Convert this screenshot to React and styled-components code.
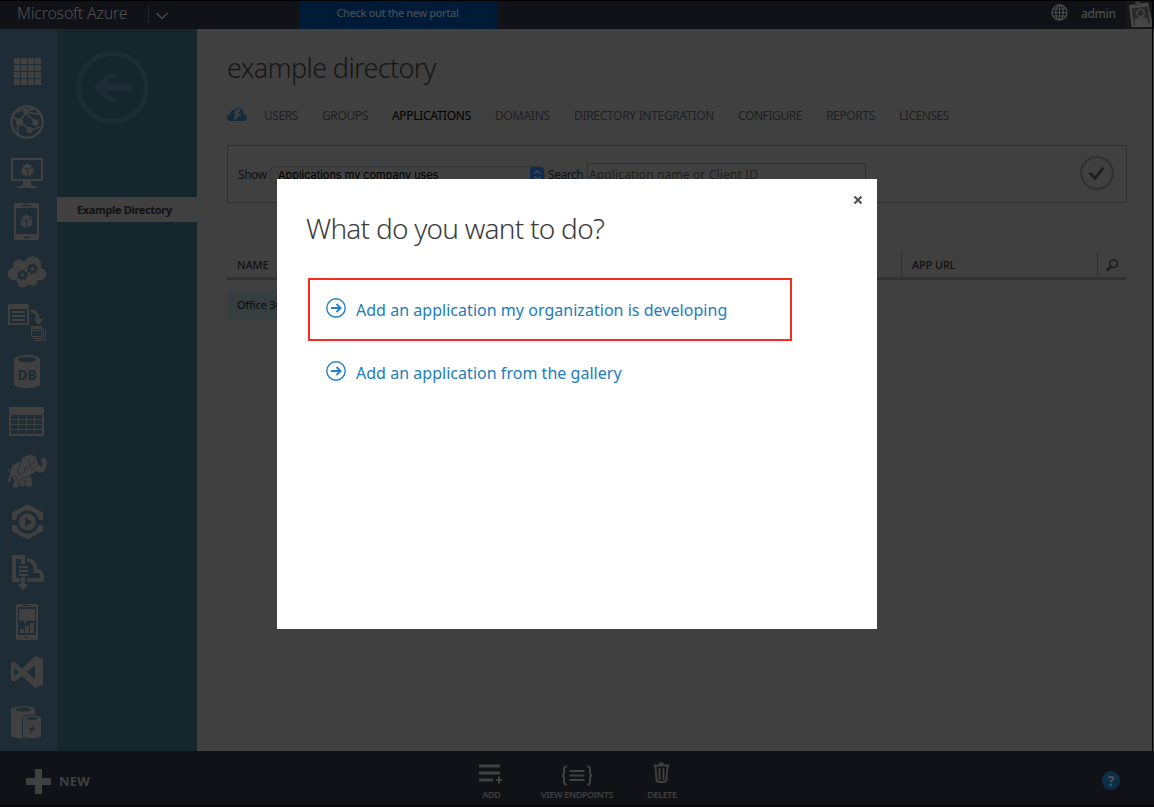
import React from "react";
import styled, { createGlobalStyle } from "styled-components";

const ink = "#404040";
const railBg = "#1d2c35";
const barBg = "#111217";

const GlobalStyle = createGlobalStyle`
  * { box-sizing: border-box; }
  body {
    margin: 0;
    background: ${ink};
    font-family: "Noto Sans", "Open Sans", sans-serif;
    color: #111;
    overflow: hidden;
  }
  h1, h2, p { margin: 0; font-weight: 300; }
  svg { display: block; flex: none; }
`;

const Page = styled.div`
  width: 1154px;
  height: 807px;
  display: grid;
  grid-template-rows: 29px 722px 56px;
  background: ${ink};
`;

const Label = styled.span`
  white-space: nowrap;
  line-height: 16px;
  font-size: ${(p) => p.$size || 12}px;
  font-weight: ${(p) => p.$weight || 400};
  letter-spacing: ${(p) => p.$track || 0}px;
  color: ${(p) => p.$color || "#111"};
`;

/* Header */
const TopBar = styled.header`
  display: flex;
  border-top: 1px solid #000;
  background: ${barBg};
`;
const Brand = styled.div`
  width: 149px;
  padding: 4px 0 0 17px;
  display: flex;
  justify-content: space-between;
`;
const BrandRule = styled.i`
  width: 1px;
  height: 18px;
  background: #24252a;
`;
const BrandMenu = styled.div`
  width: 150px;
  padding: 11px 0 0 6px;
`;
const PortalButton = styled.a`
  width: 198px;
  height: 28px;
  padding: 4px 1px 0 0;
  display: flex;
  justify-content: center;
  background: #001b37;
`;
const Account = styled.div`
  margin-left: auto;
  display: flex;
  padding-right: 1px;
`;
const GlobeSlot = styled.div`padding: 3px 13px 0 0;`;
const UserSlot = styled.div`
  width: 45px;
  padding-top: 5px;
  display: flex;
  align-items: flex-start;
`;
const Avatar = styled.div`
  width: 27px;
  background: #17171a;
  border-right: 1px solid #000;
`;

/* Body */
const Body = styled.div`
  display: grid;
  grid-template-columns: 57px 140px 1fr;
`;
const Rail = styled.nav`
  background: ${railBg};
  padding-top: 17px;
  display: flex;
  flex-direction: column;
`;
const DirectoryPane = styled.aside`
  background: #15272d;
  padding-top: 22px;
`;
const BackButton = styled.div`
  height: 146px;
  padding-left: 19px;
`;
const DirectoryItem = styled.div`
  height: 25px;
  display: flex;
  align-items: center;
  padding: 1px 0 0 20px;
  background: ${ink};
`;
const Content = styled.main`
  border-right: 1px solid #000;
  margin-right: 1px;
  padding: 20px 25px 0 30px;
`;
const Title = styled.h1`
  font-size: 27px;
  line-height: 38px;
  letter-spacing: -0.64px;
  color: #161616;
`;
const Tabs = styled.div`
  height: 58px;
  padding-top: 20px;
  display: flex;
  align-items: flex-start;
`;
const TabIcon = styled.div`
  width: 37px;
  margin-top: -2px;
`;
const Tab = styled.a`
  width: ${(p) => p.$width}px;
  margin-right: 24px;
  white-space: nowrap;
  font-size: 12px;
  line-height: 18px;
  letter-spacing: ${(p) => p.$track}px;
  color: ${(p) => (p.$active ? "#000" : "#202020")};
`;
const FilterBar = styled.section`
  height: 58px;
  border: 1px solid #303030;
  display: flex;
  padding: 17px 12px 0 10px;
`;
const FilterLabel = styled.label`
  width: ${(p) => p.$width}px;
  padding-top: 4px;
  font-size: 12px;
  line-height: 16px;
  letter-spacing: -0.45px;
`;
const Select = styled.div`
  width: 275px;
  height: 18px;
  margin: 3px 3px 0 0;
  border: 1px solid #343434;
  border-radius: 5px;
  display: flex;
  overflow: hidden;
  justify-content: space-between;
  padding-left: 7px;
  font: 11px/16px Inter, sans-serif;
  letter-spacing: -0.04px;
  color: #000;
`;
const Stepper = styled.span`
  width: 15px;
  height: 18px;
  margin: -1px -1px 0 0;
  background: #102c4d;
`;
const SearchInput = styled.div`
  width: 279px;
  height: 22px;
  border: 1px solid #2d2d2d;
  padding-left: 1px;
  font-size: 12px;
  line-height: 21px;
  letter-spacing: 0.14px;
  color: #202020;
`;
const Confirm = styled.div`
  margin: -8px 0 0 auto;
`;
const TableHead = styled.div`
  height: 29px;
  margin-top: 48px;
  border-bottom: 3px solid #323232;
  display: flex;
  line-height: 23px;
`;
const HeadCell = styled.div`
  width: ${(p) => p.$width}px;
  padding: ${(p) => (p.$icon ? "8px 0 0 8px" : "1px 0 0 10px")};
  border-left: ${(p) => (p.$first ? "0" : "1px solid #303030")};
`;
const TableRow = styled.div`
  width: 640px;
  height: 30px;
  margin-top: 10px;
  padding: 7px 10px;
  display: flex;
  align-items: flex-start;
  background: #373e40;
`;

/* Footer */
const Footer = styled.footer`
  display: flex;
  background: ${barBg};
  border-bottom: 1px solid #08090c;
  box-shadow: inset 0 -1px #000;
`;
const NewButton = styled.div`
  width: 478px;
  padding: 18px 0 0 26px;
  display: flex;
  gap: 8px;
  align-items: flex-start;
`;
const NewText = styled.span`
  padding-top: 3px;
  line-height: 19px;
  font-size: 13px;
  font-weight: 700;
  letter-spacing: 0.2px;
  color: ${ink};
`;
const Command = styled.div`
  width: ${(p) => p.$width}px;
  padding-top: 11px;
  display: flex;
  flex-direction: column;
  align-items: center;
`;
const CommandText = styled.span`
  margin-top: 3px;
  white-space: nowrap;
  font-size: 9px;
  line-height: 12px;
  font-weight: 600;
  letter-spacing: ${(p) => p.$track}px;
  color: ${ink};
`;
const Help = styled.div`
  margin: 20px 34px 0 auto;
  width: 18px;
  height: 19px;
  border-radius: 50%;
  background: #0c2f47;
  text-align: center;
  font-size: 14px;
  line-height: 19px;
  font-weight: 700;
  color: #4b5358;
`;

/* Dialog */
const Backdrop = styled.div`
  position: absolute;
  top: 0;
  left: 0;
  width: 1154px;
  height: 807px;
  padding-top: 179px;
  display: flex;
  justify-content: center;
  align-items: flex-start;
`;
const Dialog = styled.section`
  width: 600px;
  height: 450px;
  background: #fff;
  padding: 16px 14px 0 29px;
`;
const CloseRow = styled.div`
  display: flex;
  justify-content: flex-end;
  height: 14px;
`;
const Question = styled.h2`
  font-size: 28px;
  line-height: 38px;
  letter-spacing: -0.76px;
  color: #3c3c3c;
`;
const Option = styled.a`
  width: 484px;
  height: 63px;
  margin: ${(p) => (p.$marked ? "31px 0 0 2px" : "0 0 0 2px")};
  border: 2px solid ${(p) => (p.$marked ? "#fb2a20" : "transparent")};
  padding: 17px 0 0 16px;
  display: flex;
  gap: 10px;
`;
const OptionText = styled.span`
  white-space: nowrap;
  font-size: 16px;
  line-height: 26px;
  letter-spacing: 0.03px;
  color: #217cbb;
`;

const Cube = ({ x, y }) => (
  <g transform={`translate(${x} ${y})`}>
    <path d="M0-6.6 5.8-3.7 0-.8-5.8-3.7Z" />
    <path d="M-5.8-2.8-.5-.1V6.5L-5.8 3.8ZM5.8-2.8.5-.1V6.5L5.8 3.8Z" />
  </g>
);

const Gear = ({ x, y }) => (
  <g transform={`translate(${x} ${y})`} fill="none" stroke={railBg}>
    <circle r="3" strokeWidth="2" />
    <circle r="4.7" strokeWidth="1.7" strokeDasharray="1.85 1.84" />
  </g>
);

const railIcons = {
  all: [0, 1, 2, 3].map((r) =>
    [0, 1, 2, 3].map((c) => (
      <rect key={`${r}${c}`} x={14 + c * 7} y={12 + r * 7} width="6" height="6" />
    ))
  ),
  web: (
    <g fill="none" stroke={ink}>
      <circle cx="27" cy="26" r="15.7" strokeWidth="2.3" />
      <path d="M22 11C25 16 32 18 40 18M35 12C29 13 22 20 20 26M15 17C20 14 27 12 33 14M20 26 30 34 40 31M36 26C31 22 27 19 24 15M20 26C17 30 17 34 18 39M13 21 20 26" strokeWidth="1.8" />
      <g fill={ink} stroke="none">
        <circle cx="19.5" cy="26" r="3.8" />
        <circle cx="35.5" cy="26.5" r="3.3" />
        <circle cx="29.5" cy="34" r="3.1" />
        <circle cx="25" cy="15" r="2.3" />
      </g>
    </g>
  ),
  vm: (
    <>
      <path fillRule="evenodd" d="M12 12H42Q43 12 43 13V34Q43 35 42 35H12Q11 35 11 34V13Q11 12 12 12ZM13 14V33H41V14Z" />
      <path d="M23 35H31V38Q31 40 37.500 40.500V42H16.500V40.500Q23 40 23 38Z" />
      <Cube x={27.5} y={24} />
    </>
  ),
  mobile: (
    <>
      <path fillRule="evenodd" d="M15 7H38Q39 7 39 8V43Q39 44 38 44H15Q14 44 14 43V8Q14 7 15 7ZM16 12V38H37V12Z" />
      <path d="M22 9.500H31M24 41.500H29.500" stroke={railBg} strokeWidth="1.3" />
      <Cube x={26.5} y={25.3} />
    </>
  ),
  cloud: (
    <>
      <circle cx="14" cy="28" r="6.3" />
      <circle cx="19" cy="19.500" r="6" />
      <circle cx="32.500" cy="19" r="8.700" />
      <circle cx="39.800" cy="28" r="6.300" />
      <circle cx="23" cy="35" r="6.500" />
      <circle cx="32.500" cy="35" r="5" />
      <rect x="15" y="20" width="24" height="14" />
      <Gear x={22.5} y={29} />
      <Gear x={32.3} y={22.8} />
    </>
  ),
  scheduler: (
    <>
      <path fillRule="evenodd" d="M9 8H28Q29 8 29 9V29H8V9Q8 8 9 8ZM10 13V27H27V13Z" />
      <path d="M12 15H25V17H12ZM12 19H25V21H12ZM12 23H25V25H12Z" />
      <path d="M30.500 15C35 14.500 38 18 38 24" fill="none" stroke={ink} strokeWidth="3" />
      <path d="M34 23H43L38.500 29Z" />
      <path fillRule="evenodd" d="M31 30H42V41H31ZM32 33V40H41V33Z" />
      <path d="M33 34.500H40M43.500 32V42.500H33M45.500 34V44.500H35" fill="none" stroke={ink} />
    </>
  ),
  database: (
    <>
      <path d="M14 13.500C14 7.500 40 7.500 40 13.500V38C40 43.500 14 43.500 14 38Z" />
      <ellipse cx="27" cy="13.5" rx="9" ry="2.7" fill={railBg} />
      <text x="27" y="34" textAnchor="middle" fontSize="13.5" fontWeight="700" fill={railBg}>DB</text>
    </>
  ),
  table: (
    <>
      <rect x="9" y="11" width="35" height="29" rx="1" />
      {[0, 1, 2, 3].map((r) =>
        [0, 1, 2, 3].map((c) => (
          <rect key={`${r}${c}`} x={11 + c * 8} y={19 + r * 5} width="7" height="4" fill={railBg} />
        ))
      )}
    </>
  ),
  hadoop: (
    <>
      <path d="M7.500 20.500Q8 24.500 11 23.500C12 18 17 16 21 16C22 11 26 9 30 9C34 8.500 36.500 11 37 14C38 17 38.500 20.500 41.500 20.500C43.500 20 43 16 40.500 14.500Q43 11 45.500 12C48 17 47 23 43.500 25.500C40 27.500 37 26.500 35.500 24.500C34.500 27.500 31.500 28 29.500 29.500Q33 34 32 40L28 41.500 26 39 23 41 19 38.500 17.500 42 12 41 15 35 12 30 9.500 37.500 7.500 34.500C10.500 31 9 28 11 25Q7 25.500 7.500 20.500Z" />
      <path d="M21 16C21 20 17 23 17.500 26.500C21 29 25 28 25 22L29 22M28 13Q32 17 30 21Q33 25 34.500 22M14 29Q20 34 17.500 39M20 34Q24 30.500 29.500 31M26 34 24 39" fill="none" stroke={railBg} strokeWidth=".8" />
      <circle cx="33.500" cy="16.500" r=".8" fill={railBg} />
    </>
  ),
  media: (
    <>
      <path d="M27.500 8 43 16.500V35L27.500 43.500 12 35V16.500Z" />
      <path d="M11 24H44V29H11Z" fill={railBg} />
      <circle cx="27.5" cy="26" r="11.5" fill={railBg} />
      <path fillRule="evenodd" d="M27.500 17.500A8.500 8.500 0 1 1 27.490 17.500ZM25 21V31L32 26Z" />
    </>
  ),
  importExport: (
    <>
      <path d="M12 9H25V18H21V13H16V32H20V36H12ZM19 20H28V22H19ZM19 24H28V26H19ZM19 28H28V30H19ZM21 31H25V38H28L23 45 18 38H21Z" />
      <path d="M27 14C33 14 36 19 35.500 25C40 24 42 27 42 30V34H27" fill="none" stroke={ink} strokeWidth="3.700" />
    </>
  ),
  engagement: (
    <>
      <path fillRule="evenodd" d="M17 8H37Q38 8 38 9V43Q38 44 37 44H17Q16 44 16 43V9Q16 8 17 8ZM18 11V39H36V11Z" />
      <path d="M23 9.500H30M24 41.500H29" stroke={railBg} strokeWidth="1.2" />
      <path d="M20 13H34Q35 13 35 14V24Q35 25 34 25H27L24 28V25H20Q19 25 19 24V14Q19 13 20 13ZM20 33H24V37H20ZM25 30H29V37H25ZM30 27H34V37H30Z" />
    </>
  ),
  visualStudio: (
    <path fillRule="evenodd" d="M11 16.700 14 15.300 22 22.700 35 10 43 13V39L35.300 42 22 30.300 14.300 35.700 11 34.300ZM14.300 21.700V30.300L18.700 26ZM26.700 26 35 33.300V19.300Z" />
  ),
  cache: (
    <>
      <path d="M11 13.500C11 9 35 9 35 13.500V39C35 43.500 11 43.500 11 39Z" />
      <ellipse cx="23.3" cy="13.6" rx="8" ry="2" fill={railBg} />
      <path d="M22.500 22C22.500 18 41.500 18 41.500 22V40C41.500 43.500 22.500 43.500 22.500 40Z" stroke={railBg} />
      <ellipse cx="32" cy="22.5" rx="6" ry="1.5" fill={railBg} />
      <path d="M35 28 28.500 34H31.500L29 38.500 36 32.500H32.500Z" fill={railBg} />
    </>
  ),
};

const RailIcon = ({ name }) => (
  <svg width="57" height="50" fill={ink}>{railIcons[name]}</svg>
);

const tabs = [
  ["USERS", 34, -0.42],
  ["GROUPS", 46, -0.37],
  ["APPLICATIONS", 79, -0.32],
  ["DOMAINS", 55, -0.21],
  ["DIRECTORY INTEGRATION", 140, -0.31],
  ["CONFIGURE", 64, -0.42],
  ["REPORTS", 49, -0.37],
  ["LICENSES", 50, -0.46],
];

const CircleArrow = () => (
  <svg width="20" height="22" viewBox="0 0 20 22" fill="none" stroke="#2480c0">
    <circle cx="10" cy="11" r="9.2" strokeWidth="1.4" />
    <path d="M5 11H14M10.500 7 14.500 11 10.500 15" strokeWidth="1.9" />
  </svg>
);

export default function App() {
  return (
    <>
      <GlobalStyle />
      <Page>
        <TopBar>
          <Brand>
            <Label $size={16} $weight={300} $track={-0.22} $color="#505052">Microsoft Azure</Label>
            <BrandRule />
          </Brand>
          <BrandMenu>
            <svg width="14" height="8" fill="none" stroke="#4c4c4e" strokeWidth="1.4">
              <path d="M1.500 1 7 6.500 12.500 1" />
            </svg>
          </BrandMenu>
          <PortalButton>
            <Label $size={11} $weight={500} $track={-0.42} $color="#444c54">Check out the new portal</Label>
          </PortalButton>
          <Account>
            <GlobeSlot>
              <svg width="17" height="17" viewBox="0 0 17 17" fill="none" stroke="#4a4a4c" strokeWidth="1.3">
                <circle cx="8.5" cy="8.5" r="7.5" />
                <ellipse cx="8.5" cy="8.5" rx="3.7" ry="7.5" />
                <path d="M8.500 1V16M1 8.500H16M2 5H15M2 12H15" strokeWidth="1" />
              </svg>
            </GlobeSlot>
            <UserSlot>
              <Label $weight={500} $track={-0.35} $color="#4c4c4e">admin</Label>
            </UserSlot>
            <Avatar>
              <svg width="26" height="28" viewBox="0 0 26 28">
                <path d="M3 4 22 1.500 26 20V26H5.500Z" fill="#454545" />
                <path d="M9 1 14 0 15 4 10 5Z" fill="#393939" />
                <path d="M5.500 7.500 21.500 5.500 24 22 8 24Z" fill="#292929" />
                <circle cx="14.500" cy="12" r="3.700" fill="#292929" stroke="#464646" strokeWidth="1.500" />
                <path d="M9 24 8.500 19Q10.500 16 14.500 16.500Q19.500 15 22 19L23 24 21.500 23 20.500 20.500V26H9Z" fill="#464646" />
              </svg>
            </Avatar>
          </Account>
        </TopBar>

        <Body>
          <Rail>
            {Object.keys(railIcons).map((name) => <RailIcon key={name} name={name} />)}
          </Rail>
          <DirectoryPane>
            <BackButton>
              <svg width="74" height="74" viewBox="0 0 74 74">
                <circle cx="36.500" cy="36.500" r="34" fill="none" stroke={railBg} strokeWidth="5" />
                <path d="M17 36.500 32.500 22.300H41L30 32.600H55V40H30L41 50.500H32.500Z" fill={railBg} />
              </svg>
            </BackButton>
            <DirectoryItem>
              <Label $size={11} $weight={700} $track={-0.34}>Example Directory</Label>
            </DirectoryItem>
          </DirectoryPane>
          <Content>
            <Title>example directory</Title>
            <Tabs>
              <TabIcon>
                <svg width="20" height="18" viewBox="0 0 20 18">
                  <path d="M4 16C-1 16-1 10 3 9.300C3 6 6 4 8.500 5.500C9 2 14 1 16 5C17 6.500 16.500 8 16 9C21 9 21 16 17 16Z" fill="#142b3e" />
                  <path d="M11.500 3 6 9.500H9L6 13.500 7.500 13V15.500L14.500 8.500H11.500L14 4.500Z" fill={ink} />
                </svg>
              </TabIcon>
              {tabs.map(([text, width, track]) => (
                <Tab key={text} $width={width} $track={track} $active={text === "APPLICATIONS"}>{text}</Tab>
              ))}
            </Tabs>
            <FilterBar>
              <FilterLabel $width={32}>Show</FilterLabel>
              <Select>
                Applications my company uses
                <Stepper>
                  <svg width="15" height="18" fill="none" stroke="#454b52" strokeWidth="1.200">
                    <path d="M4.500 7.500 7.500 4.800 10.500 7.500M4.500 10.500 7.500 13.200 10.500 10.500" />
                  </svg>
                </Stepper>
              </Select>
              <FilterLabel $width={39}>Search</FilterLabel>
              <SearchInput>Application name or Client ID</SearchInput>
              <Confirm>
                <svg width="34" height="36" viewBox="0 0 34 36" fill="none">
                  <circle cx="17" cy="18" r="15.900" stroke="#303030" strokeWidth="2" />
                  <path d="M9.500 17.500 15 23.300 23.500 12.700" stroke="#1f1f1f" strokeWidth="3" />
                </svg>
              </Confirm>
            </FilterBar>
            <TableHead>
              <HeadCell $first $width={674}><Label $size={11} $weight={500} $track={-0.12}>NAME</Label></HeadCell>
              <HeadCell $width={196}><Label $size={11} $weight={500} $track={-0.12}>APP URL</Label></HeadCell>
              <HeadCell $icon $width={30}>
                <svg width="13" height="13" viewBox="0 0 13 13" fill="none" stroke="#1d1d1d">
                  <circle cx="7.600" cy="4.700" r="3.800" strokeWidth="1.600" />
                  <path d="M5 7.500 1 11.500" strokeWidth="2.600" />
                </svg>
              </HeadCell>
            </TableHead>
            <TableRow><Label $size={11} $weight={500} $track={-0.25}>Office 365</Label></TableRow>
          </Content>
        </Body>

        <Footer>
          <NewButton>
            <svg width="25" height="25" fill={ink}><path d="M9 0H16V9H25V16H16V25H9V16H0V9H9Z" /></svg>
            <NewText>NEW</NewText>
          </NewButton>
          <Command $width={27}>
            <svg width="25" height="24" viewBox="0 0 25 24" fill={ink}>
              <path d="M0 2.500H21V5.500H0ZM0 9.500H21V12.500H0ZM0 16.500H14V19.500H0ZM17 17H19V14.500H21V17H23V19H21V21.500H19V19H17Z" />
            </svg>
            <CommandText $track={-0.3}>ADD</CommandText>
          </Command>
          <Command $width={144}>
            <svg width="32" height="24" viewBox="0 0 32 24" fill="none" stroke={ink} strokeWidth="2">
              <path d="M6 4.500Q3 4 3 7V10.500Q3 13.500 1 13.500Q3 13.500 3 17V20Q3 23 6 22.500M26 4.500Q29 4 29 7V10.500Q29 13.500 31 13.500Q29 13.500 29 17V20Q29 23 26 22.500M8.500 9H23.500M8.500 13.500H23.500M8.500 18H23.500" />
            </svg>
            <CommandText $track={-0.34}>VIEW ENDPOINTS</CommandText>
          </Command>
          <Command $width={26}>
            <svg width="19" height="24" viewBox="0 0 19 24" fill="none" stroke={ink} strokeWidth="1.900">
              <path d="M.5 3.500H16.500M6 1.500H10.500M2.500 4 3.500 17.500Q4 20 6 20H11Q13 20 13.500 17.500L14.500 4M6.500 6V18M10.500 6V18" />
            </svg>
            <CommandText $track={-0.4}>DELETE</CommandText>
          </Command>
          <Help>?</Help>
        </Footer>
      </Page>

      <Backdrop>
        <Dialog>
          <CloseRow>
            <svg width="10" height="10" viewBox="0 0 10 10" stroke="#555" strokeWidth="2.200">
              <path d="M1.500 1.500 8.500 8.500M8.500 1.500 1.500 8.500" />
            </svg>
          </CloseRow>
          <Question>What do you want to do?</Question>
          <Option $marked>
            <CircleArrow />
            <OptionText>Add an application my organization is developing</OptionText>
          </Option>
          <Option>
            <CircleArrow />
            <OptionText>Add an application from the gallery</OptionText>
          </Option>
        </Dialog>
      </Backdrop>
    </>
  );
}
